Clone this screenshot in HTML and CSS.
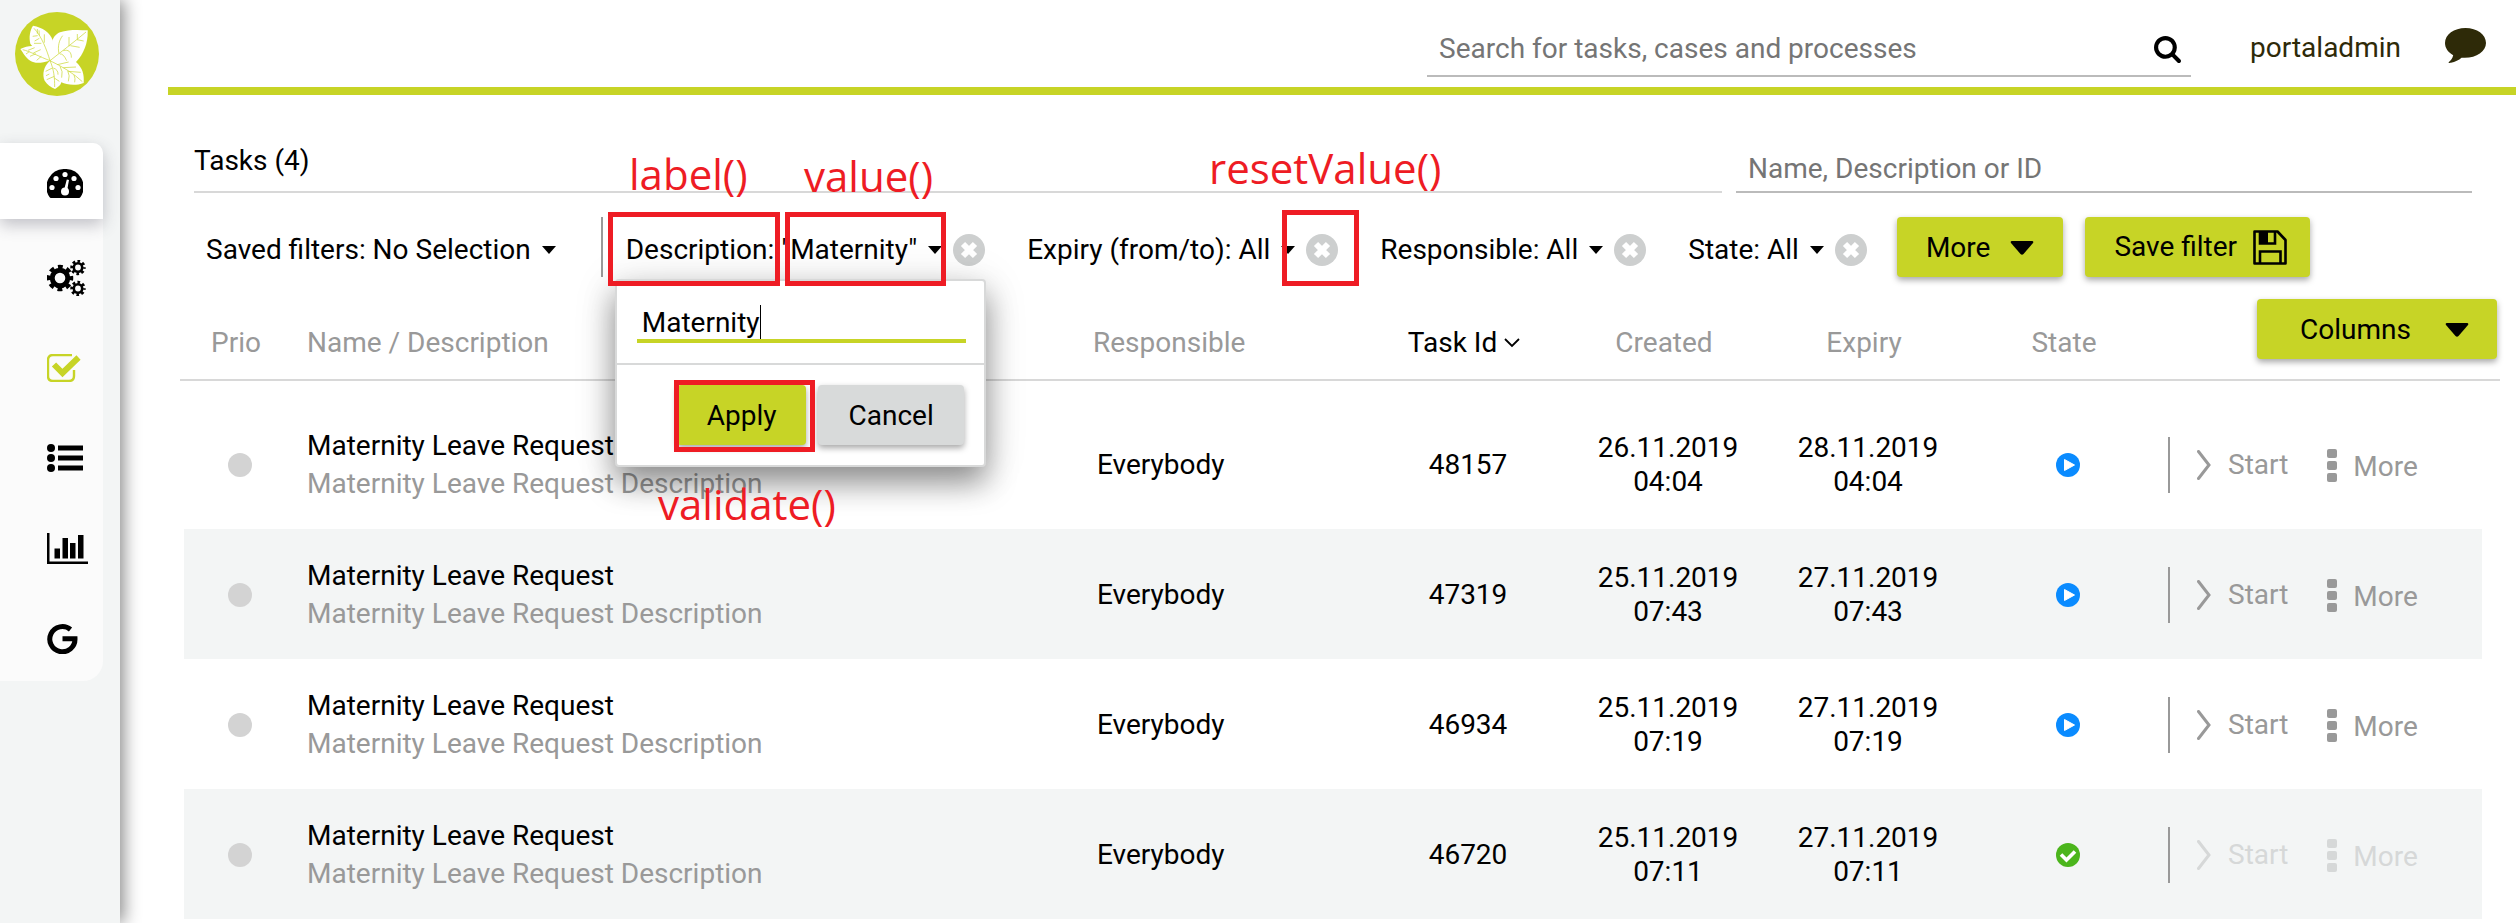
FILE: index.html
```html
<!DOCTYPE html>
<html lang="en">
<head>
<meta charset="utf-8">
<meta name="viewport" content="width=device-width, initial-scale=1">
<title>Tasks</title>
<link rel="stylesheet" href="styles.css">
</head>
<body>
<svg class="sprite" aria-hidden="true">
  <symbol id="i-clear" viewBox="0 0 32 32"><circle cx="16" cy="16" r="16" fill="#cdcfcf"/><path d="M10 10l12 12M22 10l-12 12" stroke="#fff" stroke-width="6"/></symbol>
  <symbol id="i-caret" viewBox="0 0 14 8"><path d="M0 0h14L7 8z" fill="#000"/></symbol>
  <symbol id="i-drop" viewBox="0 0 24 14"><path d="M2 0h20q2 0 1 2l-9.500 11q-1.500 1.500-3 0L1 2Q0 0 2 0z" fill="#000"/></symbol>
  <symbol id="i-play" viewBox="0 0 24 24"><circle cx="12" cy="12" r="12" fill="#0a8bff"/><path d="M8.500 6.500v11l10-5.500z" fill="#fff" stroke="#fff" stroke-linejoin="round"/></symbol>
  <symbol id="i-done" viewBox="0 0 24 24"><circle cx="12" cy="12" r="12" fill="#4bb51c"/><path d="M5 11.500l5.500 5.500L19 8.500" fill="none" stroke="#fff" stroke-width="3.600"/></symbol>
  <symbol id="i-start" viewBox="0 0 14 30"><path d="M1.500 1.500L12 15 1.500 28.500" fill="none" stroke="currentColor" stroke-width="3" stroke-linecap="round"/></symbol>
  <symbol id="i-dots" viewBox="0 0 10 33"><g fill="currentColor"><rect width="10" height="9" rx="2"/><rect y="12" width="10" height="9" rx="2"/><rect y="24" width="10" height="9" rx="2"/></g></symbol>
</svg>

<nav class="sidebar" aria-label="Main">
  <a class="logo" href="#" aria-label="Home">
    <svg viewBox="45 37 252 252" width="84" height="84">
      <circle cx="171" cy="163" r="126" fill="#c7d426"/>
      <g fill="#fff">
        <path d="M150 183C128 168 100 145 91 132 86 112 90 92 99 78 128 84 150 97 158 122 160 145 158 165 150 183z"/>
        <path d="M150 183C150 150 150 110 180 98 205 89 235 90 263 92 265 130 250 165 228 187 200 195 170 190 150 183z"/>
        <path d="M150 183C125 190 105 192 92 184 76 174 70 160 61 148 75 140 90 138 100 139 120 148 140 162 150 183z"/>
        <path d="M150 183C130 200 126 225 134 243 142 256 152 262 165 268 178 260 182 255 184 248 180 225 168 200 150 183z"/>
        <path d="M150 183C170 175 210 175 228 187 248 205 253 225 251 250 228 259 200 256 184 248 165 230 160 205 150 183z"/>
      </g>
      <g fill="none" stroke="#c7d426" stroke-width="2">
        <path d="M150 183C140 150 125 110 102 86M150 183C185 155 225 125 258 97M150 183C120 172 90 155 68 150M150 183C162 210 164 235 164 262M150 183C185 200 220 220 247 246"/>
        <path d="M98 110l15 -2M102 131l22 0M117 92l1 16M133 104v25M112 88l0 14M104 124l14-8"/>
        <path d="M177 162C172 140 178 120 188 108M207 140V112M232 119V103M190 153C205 148 215 158 214 174M211 138l28 5M231 120l20 4M180 163q10 -2 20 20"/>
        <path d="M84 152l20-8M100 160l22-10M90 170l18-8M110 182l14-12M78 163l10-7"/>
        <path d="M137 215l20-10M140 240l23-10M160 205q15 5 14 20M163 235l15 10M138 228l10-5M172 195l34-8M190 204l38-2M205 215l37 3M180 200q10 15 5 34M203 213q8 15 2 32M222 226q5 10 2 22"/>
      </g>
    </svg>
  </a>
  <ul class="menu">
    <li><a class="menu-item active" href="#" aria-label="Dashboard">
      <svg width="36" height="29" viewBox="0 0 36 29"><path d="M18 0A18 18 0 0 0 2.500 28Q3 29 4 29H32Q33 29 33.500 28A18 18 0 0 0 18 0z"/><g fill="#fff"><circle cx="18" cy="5.500" r="2.600"/><circle cx="9" cy="9.500" r="2.600"/><circle cx="27" cy="9.500" r="2.600"/><circle cx="5" cy="18.500" r="2.600"/><circle cx="31" cy="18.500" r="2.600"/><circle cx="18" cy="22.500" r="4"/><path d="M19.800 10.500l2.200.5-2 11-3-1z"/></g></svg></a></li>
    <li><a class="menu-item" href="#" aria-label="Processes">
      <svg width="40" height="36" viewBox="0 0 40 36" fill="none" stroke="#000"><circle cx="13" cy="18" r="7.800" stroke-width="5"/><circle cx="13" cy="18" r="11" stroke-width="4.500" stroke-dasharray="4.700 3.940" stroke-dashoffset="2.350"/><circle cx="31" cy="7.500" r="4.200" stroke-width="2.600"/><circle cx="31" cy="7.500" r="6.200" stroke-width="3" stroke-dasharray="2.600 2.269" stroke-dashoffset="1.300"/><circle cx="31" cy="28.500" r="4.200" stroke-width="2.600"/><circle cx="31" cy="28.500" r="6.200" stroke-width="3" stroke-dasharray="2.600 2.269" stroke-dashoffset="1.300"/></svg></a></li>
    <li><a class="menu-item" href="#" aria-label="Tasks">
      <svg width="34" height="28" viewBox="0 0 34 28" fill="none" stroke="#c7d426"><path d="M25 1H6Q1 1 1 6V22Q1 27 6 27H22Q27 27 27 22V16" stroke-width="2.400"/><path d="M7 10.500l8.500 8.500L31.500 3.500" stroke-width="6"/></svg></a></li>
    <li><a class="menu-item" href="#" aria-label="Cases">
      <svg width="36" height="28" viewBox="0 0 36 28"><circle cx="4" cy="4" r="4"/><circle cx="4" cy="14" r="4"/><circle cx="4" cy="24" r="4"/><path d="M11 1.500h25v5H11zM11 11.500h25v5H11zM11 21.500h25v5H11z"/></svg></a></li>
    <li><a class="menu-item" href="#" aria-label="Statistics">
      <svg width="41" height="31" viewBox="0 0 41 31"><path d="M0 0h2.500v28.500H41V31H0zM7.500 15.500h5.500v10H7.500zM15.500 5h5.500v20.500h-5.500zM23 10h5.500v15.500H23zM31 2h5.500v23.500H31z"/></svg></a></li>
    <li><a class="menu-item" href="#" aria-label="Google">
      <svg width="31" height="31" viewBox="0 0 31 31" fill="none" stroke="#000" stroke-width="5"><path d="M23.500 6.500A12.600 12.600 0 1 0 28 15.700H15.500"/></svg></a></li>
  </ul>
</nav>

<main class="main">
  <header class="topbar">
    <form class="search" role="search">
      <input class="text-input" type="text" aria-label="Search" placeholder="Search for tasks, cases and processes">
      <button class="plain" type="button" aria-label="Search"><svg width="27" height="27" viewBox="64 128 1664 1664"><path d="M1216 832q0-185-131.500-316.500t-316.500-131.500-316.500 131.500-131.500 316.500 131.500 316.500 316.500 131.500 316.500-131.500 131.500-316.500zm512 832q0 52-38 90t-90 38q-54 0-90-38l-343-342q-179 124-399 124-143 0-273.500-55.500t-225-150-150-225-55.500-273.500 55.500-273.500 150-225 225-150 273.500-55.500 273.500 55.500 225 150 150 225 55.500 273.500q0 220-124 399l343 343q37 37 37 90z"/></svg></button>
    </form>
    <a class="user" href="#">portaladmin</a>
    <button class="plain chat" type="button" aria-label="Chat"><svg width="41" height="35" viewBox="0 0 41 35"><path d="M20.500 0C9 0 0 6.500 0 15c0 5 3.200 9.500 8.200 12.200C7.500 31 5 33 3.500 34.300 3.500 35.200 5 35 6 34.800 10 34 14 32 16.500 29.700 30 31 41 24 41 15 41 6.500 32 0 20.500 0z" fill="#2e2a08"/></svg></button>
  </header>

  <section class="tasks">
    <div class="title-row">
      <h1 class="title">Tasks (4)</h1>
      <input class="text-input name-filter" type="text" aria-label="Filter tasks" placeholder="Name, Description or ID">
    </div>

    <div class="filters">
      <div class="filter saved"><button class="plain pick" type="button">Saved filters: No Selection<svg class="caret"><use href="#i-caret"/></svg></button></div>
      <div class="filter">
        <button class="plain pick" type="button">Description: "Maternity"<svg class="caret"><use href="#i-caret"/></svg></button>
        <button class="plain clear" type="button" aria-label="Reset description"><svg><use href="#i-clear"/></svg></button>
        <form class="popup">
          <div class="popup-field">
            <label class="field"><span class="sizer">Maternity</span><input class="popup-input" type="text" aria-label="Description" value="Maternity"></label>
          </div>
          <div class="popup-actions">
            <button class="button" type="button">Apply</button>
            <button class="button grey" type="button">Cancel</button>
          </div>
        </form>
      </div>
      <div class="filter">
        <button class="plain pick" type="button">Expiry (from/to): All<svg class="caret"><use href="#i-caret"/></svg></button>
        <button class="plain clear" type="button" aria-label="Reset expiry"><svg><use href="#i-clear"/></svg></button>
      </div>
      <div class="filter">
        <button class="plain pick" type="button">Responsible: All<svg class="caret"><use href="#i-caret"/></svg></button>
        <button class="plain clear" type="button" aria-label="Reset responsible"><svg><use href="#i-clear"/></svg></button>
      </div>
      <div class="filter">
        <button class="plain pick" type="button">State: All<svg class="caret"><use href="#i-caret"/></svg></button>
        <button class="plain clear" type="button" aria-label="Reset state"><svg><use href="#i-clear"/></svg></button>
      </div>
      <div class="filter-buttons">
        <button class="button more" type="button">More<svg class="drop"><use href="#i-drop"/></svg></button>
        <button class="button save" type="button">Save filter<svg width="34" height="35" viewBox="0 0 34 35" fill="none" stroke="#000" stroke-width="2.600"><path d="M1.500 1.500H24.500L32.500 10V33.500H1.500z" stroke-linejoin="round"/><path d="M7 1.500V13.500H22V1.500M7 33V21.500H27.500V33"/><path d="M7 2h8v11H7z" fill="#000" stroke="none"/></svg></button>
      </div>
    </div>

    <table class="grid">
      <colgroup><col class="c-prio"><col><col class="c-resp"><col class="c-mid"><col class="c-mid"><col class="c-mid"><col class="c-mid"><col class="c-act"></colgroup>
      <thead>
        <tr>
          <th class="prio">Prio</th><th>Name / Description</th><th>Responsible</th>
          <th class="mid sorted">Task Id<svg width="16" height="10" viewBox="0 0 16 10"><path d="M1 1l7 7 7-7" fill="none" stroke="#000" stroke-width="1.800"/></svg></th>
          <th class="mid">Created</th><th class="mid">Expiry</th><th class="mid">State</th>
          <th class="col-action"><button class="button columns" type="button">Columns<svg class="drop"><use href="#i-drop"/></svg></button></th>
        </tr>
      </thead>
      <tbody>
        <tr>
          <td class="prio"><span class="dot"></span></td>
          <td class="name">Maternity Leave Request<br><span class="desc">Maternity Leave Request Description</span></td>
          <td class="resp">Everybody</td><td class="mid">48157</td><td class="mid">26.11.2019<br>04:04</td><td class="mid">28.11.2019<br>04:04</td>
          <td class="mid"><svg class="state"><use href="#i-play"/></svg></td>
          <td><div class="actions"><button class="plain" type="button"><svg class="start"><use href="#i-start"/></svg>Start</button><button class="plain act-more" type="button"><svg class="dots"><use href="#i-dots"/></svg><span>More</span></button></div></td>
        </tr>
        <tr>
          <td class="prio"><span class="dot"></span></td>
          <td class="name">Maternity Leave Request<br><span class="desc">Maternity Leave Request Description</span></td>
          <td class="resp">Everybody</td><td class="mid">47319</td><td class="mid">25.11.2019<br>07:43</td><td class="mid">27.11.2019<br>07:43</td>
          <td class="mid"><svg class="state"><use href="#i-play"/></svg></td>
          <td><div class="actions"><button class="plain" type="button"><svg class="start"><use href="#i-start"/></svg>Start</button><button class="plain act-more" type="button"><svg class="dots"><use href="#i-dots"/></svg><span>More</span></button></div></td>
        </tr>
        <tr>
          <td class="prio"><span class="dot"></span></td>
          <td class="name">Maternity Leave Request<br><span class="desc">Maternity Leave Request Description</span></td>
          <td class="resp">Everybody</td><td class="mid">46934</td><td class="mid">25.11.2019<br>07:19</td><td class="mid">27.11.2019<br>07:19</td>
          <td class="mid"><svg class="state"><use href="#i-play"/></svg></td>
          <td><div class="actions"><button class="plain" type="button"><svg class="start"><use href="#i-start"/></svg>Start</button><button class="plain act-more" type="button"><svg class="dots"><use href="#i-dots"/></svg><span>More</span></button></div></td>
        </tr>
        <tr>
          <td class="prio"><span class="dot"></span></td>
          <td class="name">Maternity Leave Request<br><span class="desc">Maternity Leave Request Description</span></td>
          <td class="resp">Everybody</td><td class="mid">46720</td><td class="mid">25.11.2019<br>07:11</td><td class="mid">27.11.2019<br>07:11</td>
          <td class="mid"><svg class="state"><use href="#i-done"/></svg></td>
          <td><div class="actions"><button class="plain" type="button" disabled><svg class="start"><use href="#i-start"/></svg>Start</button><button class="plain act-more" type="button" disabled><svg class="dots"><use href="#i-dots"/></svg><span>More</span></button></div></td>
        </tr>
      </tbody>
    </table>
  </section>
</main>

<div class="notes">
  <span class="frame frame-label"></span><span class="note note-label">label()</span>
  <span class="frame frame-value"></span><span class="note note-value">value()</span>
  <span class="frame frame-reset"></span><span class="note note-reset">resetValue()</span>
  <span class="frame frame-apply"></span><span class="note note-validate">validate()</span>
</div>
</body>
</html>
```
FILE: styles.css
```css
* { box-sizing: border-box; }
body {
  margin: 0;
  display: flex;
  min-height: 100vh;
  position: relative;
  background: #fff;
  color: #000;
  font: 28px/34px Roboto, "Liberation Sans", sans-serif;
}
.sprite { position: absolute; width: 0; height: 0; }
svg { display: block; flex: none; }
input, button { font: inherit; color: inherit; margin: 0; }
.plain { border: 0; padding: 0; background: none; display: flex; align-items: center; white-space: nowrap; }
a { color: inherit; text-decoration: none; }

.sidebar {
  flex: 0 0 120px;
  background: #f3f5f5;
  box-shadow: 4px 0 16px rgba(0, 0, 0, .45);
}
.logo { display: block; padding: 12px 15px 47px; }
.menu {
  list-style: none;
  margin: 0 17px 0 0;
  padding: 0;
  background: #fbfbfb;
  border-radius: 0 10px 20px 0;
}
.menu-item { display: flex; align-items: center; height: 90px; padding: 4px 0 0 47px; }
.menu-item.active {
  height: 76px;
  margin-bottom: 12px;
  background: #fff;
  border-radius: 0 10px 0 0;
  box-shadow: 0 6px 16px rgba(60, 60, 80, .3);
}

.main { flex: 1; min-width: 0; padding: 0 4px 0 48px; }
.topbar {
  display: flex;
  justify-content: flex-end;
  align-items: flex-end;
  height: 95px;
  padding: 0 30px 10px 0;
  border-bottom: 8px solid #c7d426;
}
.search {
  display: flex;
  align-items: center;
  flex: 0 1 764px;
  padding: 0 10px 9px 12px;
  border-bottom: 2px solid #bbb;
}
.text-input { flex: 1; min-width: 0; border: 0; padding: 0; height: 34px; background: none; outline: 0; }
.text-input::placeholder { color: #757575; opacity: 1; }
.user { margin: 0 44px 12px 59px; color: #2e2a08; }
.chat { margin-bottom: 14px; }

.tasks { padding-left: 12px; padding-right: 16px; }
.title-row {
  display: grid;
  grid-template-columns: 1528fr 736fr;
  gap: 14px;
  height: 98px;
  align-items: end;
  padding: 0 28px 0 14px;
}
.title { margin: 0; font: inherit; padding-bottom: 13px; border-bottom: 2px solid #d8d8d8; }
.name-filter { height: 42px; padding: 0 0 6px 12px; border-bottom: 2px solid #bbb; }

.filters { display: flex; height: 60px; margin: 24px 0 22px; padding-left: 26px; }
.filter { display: flex; align-items: center; position: relative; padding-top: 6px; margin-right: 42px; }
.filter.saved { padding-right: 45px; margin-right: 23px; border-right: 2px solid #999; }
.filter:nth-child(5) { margin-right: 30px; }
.caret { width: 14px; height: 8px; margin-left: 11px; }
.clear { margin-left: 11px; }
.clear svg { width: 32px; height: 32px; }
.filter-buttons { display: flex; gap: 22px; }
.button {
  display: flex;
  align-items: center;
  height: 60px;
  border: 0;
  border-radius: 4px;
  padding: 2px 30px 0;
  background: #c7d426;
  box-shadow: 0 3px 6px rgba(0, 0, 0, .35);
  white-space: nowrap;
}
.button.grey { background: #d8dada; }
.button.more { gap: 20px; padding: 2px 29px 0; }
.button.save { gap: 16px; padding: 0 23px 0 29px; }
.button.columns { justify-content: space-between; width: 240px; padding: 2px 28px 0 43px; }
.drop { width: 24px; height: 14px; }

.popup {
  position: absolute;
  z-index: 2;
  left: -11px;
  top: 62px;
  width: 371px;
  background: #fff;
  border: 2px solid #d8d9d9;
  border-radius: 4px;
  box-shadow: 0 16px 30px rgba(0, 0, 0, .4), 0 4px 46px rgba(0, 0, 0, .12);
}
.popup-field { padding: 24px 18px 20px 20px; border-bottom: 2px solid #d8d9d9; }
.field { display: block; position: relative; }
.sizer { position: absolute; left: 5px; top: 0; border-right: 1px solid #000; color: transparent; }
.popup-input {
  display: block;
  width: 100%;
  height: 38px;
  border: 0;
  border-bottom: 4px solid #c7d426;
  padding: 0 5px;
  background: none;
  outline: 0;
}
.popup-actions { display: flex; justify-content: flex-end; gap: 12px; padding: 20px; }

.grid { width: 100%; table-layout: fixed; border-collapse: separate; border-spacing: 0; }
.c-prio { width: 127px; }
.c-resp { width: 275px; }
.c-mid { width: 200px; }
.c-act { width: 332px; }
th {
  height: 82px;
  padding: 0 0 19px;
  border-bottom: 2px solid #d8d8d8;
  vertical-align: bottom;
  text-align: left;
  font-weight: 400;
  color: #999;
}
th.prio { padding-left: 31px; }
th.mid { padding-right: 8px; }
th.sorted { color: #000; }
th.sorted svg { display: inline-block; vertical-align: 4px; margin-left: 7px; }
th.col-action { padding-bottom: 20px; }
.mid { text-align: center; }
.columns { margin: 0 3px 0 auto; color: #000; }
td { height: 130px; padding: 2px 0 0; vertical-align: middle; }
tbody tr:first-child td { height: 148px; padding-top: 20px; }
tbody tr:nth-child(even) td { background: #f3f5f5; }
td:first-child { border-left: 4px solid #fff; }
td:last-child { border-right: 18px solid #fff; }
td.prio { padding-left: 44px; }
.dot { display: block; width: 24px; height: 24px; border-radius: 50%; background: #d3d3d3; }
.name { line-height: 38px; }
.desc { color: #999; }
.resp { padding-left: 4px; }
.state { width: 24px; height: 24px; margin: 0 auto; }
.actions { display: flex; align-items: center; height: 56px; padding-left: 27px; gap: 39px; border-left: 2px solid #999; color: #999; }
.actions .plain:disabled { color: #d6d8d8; }
.start { width: 14px; height: 30px; margin-right: 17px; }
.dots { width: 10px; height: 33px; margin-right: 16px; }
.act-more span { padding-top: 4px; }

.notes { position: absolute; inset: 0; z-index: 3; overflow: hidden; pointer-events: none; color: #ee1c24; font: 42px/54px "Open Sans", "Noto Sans", sans-serif; }
.frame { position: absolute; border: 5px solid #ee1c24; }
.frame-label { left: 608px; top: 212px; width: 172px; height: 74px; }
.frame-value { left: 785px; top: 212px; width: 161px; height: 74px; }
.frame-reset { left: 1282px; top: 210px; width: 77px; height: 76px; }
.frame-apply { left: 674px; top: 380px; width: 141px; height: 72px; }
.note { position: absolute; }
.note-label { left: 629px; top: 147px; }
.note-value { left: 804px; top: 149px; }
.note-reset { left: 1209px; top: 141px; }
.note-validate { left: 658px; top: 477px; }
```
